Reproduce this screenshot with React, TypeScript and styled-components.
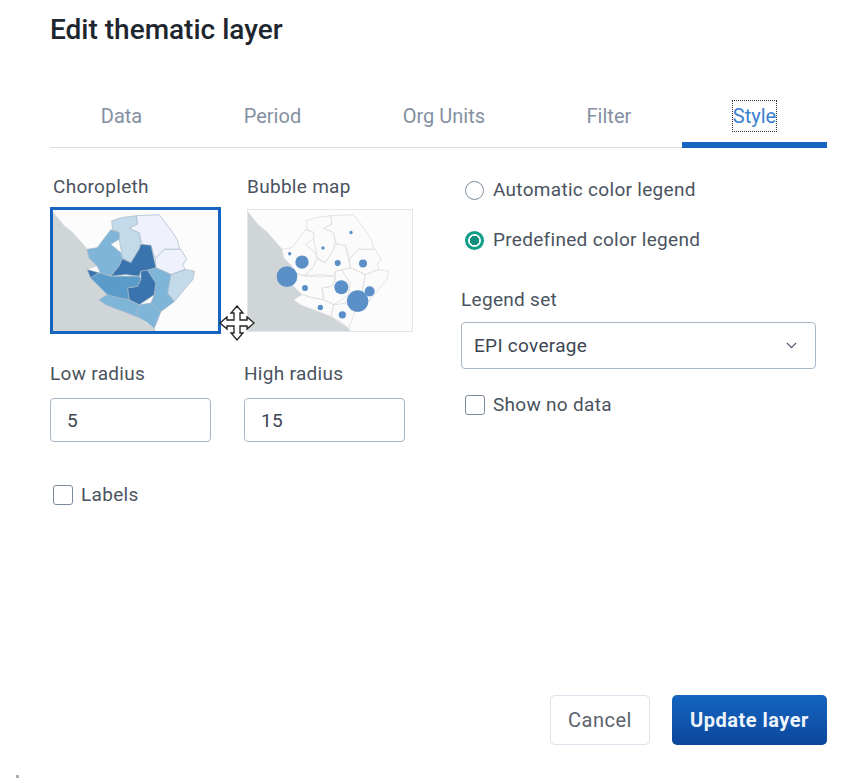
import React from 'react'
import styled, { createGlobalStyle } from 'styled-components'
import { ChevronDown } from 'lucide-react'

const GlobalStyle = createGlobalStyle`
    html, body {
        margin: 0;
        padding: 0;
        background: #fff;
        overflow: hidden;
    }
    * {
        box-sizing: border-box;
    }
    body {
        font-family: Roboto, "Liberation Sans", sans-serif;
    }
`

// shapes share one coordinate space, the outline of the country is the same in both thumbnails
const SEA = 'M43 128 L75 168 L100 188 L145 238 L150 265 L175 290 L145 300 L155 325 L175 345 L205 375 L180 390 L200 405 L240 420 L292 440 L345 475 L350 483 L43 483 Z'

const regions = [
    { d: 'M218 155 L250 145 L292 140 L295 165 L270 178 L300 190 L305 215 L300 240 L275 280 L250 265 L245 235 L240 210 L240 190 L220 180 Z', fill: '#c3daea' },
    { d: 'M292 140 L360 137 L385 170 L400 190 L415 215 L420 240 L375 240 L348 268 L335 228 L315 230 L305 215 L300 190 L270 178 L295 165 Z', fill: '#eff2fd' },
    { d: 'M348 268 L375 240 L425 240 L442 270 L430 285 L437 300 L395 315 L350 295 Z', fill: '#eff2fd' },
    { d: 'M145 240 L175 235 L215 182 L240 190 L240 210 L215 225 L245 250 L250 268 L240 290 L215 318 L185 312 L175 290 L150 265 Z', fill: '#7fb5d9' },
    { d: 'M305 225 L335 228 L350 295 L325 302 L305 305 L300 320 L260 315 L215 320 L240 290 L250 268 L275 280 L300 240 Z', fill: '#3a74ae' },
    { d: 'M145 300 L180 310 L155 325 Z', fill: '#3a74ae' },
    { d: 'M305 305 L325 302 L350 340 L345 375 L300 405 L270 390 L265 355 L295 350 L305 330 Z', fill: '#3a74ae' },
    { d: 'M180 310 L215 320 L300 320 L305 330 L295 350 L265 355 L270 390 L240 385 L205 375 L175 345 L155 325 Z', fill: '#5b9bc9' },
    { d: 'M325 302 L350 295 L395 315 L385 370 L405 395 L365 425 L335 400 L345 375 L350 340 Z', fill: '#7fb5d9' },
    { d: 'M395 315 L437 300 L465 305 L460 330 L430 365 L405 395 L385 370 Z', fill: '#c3daea' },
    { d: 'M180 390 L205 375 L240 385 L270 390 L300 405 L292 440 L240 420 L200 405 Z', fill: '#7fb5d9' },
    { d: 'M300 405 L335 400 L365 425 L345 475 L320 455 L292 440 Z', fill: '#7fb5d9' },
]

const bubbles = [
    [160, 321, 31], [205, 278, 20], [168, 253, 5], [268, 236, 5], [352, 190, 5],
    [312, 281, 9], [388, 282, 12], [214, 355, 9], [323, 353, 21], [372, 394, 32],
    [408, 365, 15], [260, 413, 8], [326, 435, 11],
]

const tabs = ['Data', 'Period', 'Org Units', 'Filter', 'Style']

const MapDrawing: React.FC<{ bubble?: boolean }> = ({ bubble }) => (
    <MapSvg viewBox="43 123 492 360" preserveAspectRatio="none">
        <rect x="43" y="123" width="492" height="360" fill="#fcfcfc" />
        <path d={SEA} fill="#d0d5d8" />
        {regions.map((r) => (
            <path
                key={r.d}
                d={r.d}
                fill={bubble ? '#fbfbfb' : r.fill}
                stroke={bubble ? '#d6d6d6' : '#a3b4c3'}
                strokeWidth="2"
            />
        ))}
        {bubble && bubbles.map(([cx, cy, r]) => (
            <circle key={cx} cx={cx} cy={cy} r={r} fill="#5a8fc7" />
        ))}
    </MapSvg>
)

const App: React.FC = () => {
    return (
        <>
            <GlobalStyle />
            <Dialog>
                <Title>Edit thematic layer</Title>
                <TabBar>
                    {tabs.map((t) => (
                        <Tab key={t} $active={t === 'Style'}>
                            <TabText $active={t === 'Style'}>{t}</TabText>
                        </Tab>
                    ))}
                </TabBar>

                <Columns>
                    <LeftColumn>
                        <ThumbRow>
                            <Thumb>
                                <FieldLabel $indent>Choropleth</FieldLabel>
                                <ThumbFrame $selected>
                                    <MapDrawing />
                                </ThumbFrame>
                            </Thumb>
                            <Thumb>
                                <FieldLabel>Bubble map</FieldLabel>
                                <ThumbFrame>
                                    <MapDrawing bubble />
                                </ThumbFrame>
                            </Thumb>
                        </ThumbRow>

                        <RadiusRow>
                            <div>
                                <InputLabel>Low radius</InputLabel>
                                <ValueBox>5</ValueBox>
                            </div>
                            <div>
                                <InputLabel>High radius</InputLabel>
                                <ValueBox>15</ValueBox>
                            </div>
                        </RadiusRow>

                        <LabelsRow>
                            <CheckBox />
                            Labels
                        </LabelsRow>
                    </LeftColumn>

                    <RightColumn>
                        <RadioRow>
                            <Radio />
                            Automatic color legend
                        </RadioRow>
                        <RadioRow>
                            <Radio $checked />
                            Predefined color legend
                        </RadioRow>
                        <LegendLabel>Legend set</LegendLabel>
                        <Select>
                            EPI coverage
                            <ChevronDown size={17} strokeWidth={1.8} color="#4a5568" />
                        </Select>
                        <NoDataRow>
                            <CheckBox />
                            Show no data
                        </NoDataRow>
                    </RightColumn>
                </Columns>

                <Footer>
                    <CancelButton>Cancel</CancelButton>
                    <UpdateButton>Update layer</UpdateButton>
                </Footer>
            </Dialog>

            <MoveCursor viewBox="0 0 36 36">
                <path
                    d="M18 1 L24 8 L21 8 L21 15 L28 15 L28 12 L35 18 L28 24 L28 21 L21 21 L21 28 L24 28 L18 35 L12 28 L15 28 L15 21 L8 21 L8 24 L1 18 L8 12 L8 15 L15 15 L15 8 L12 8 Z"
                    fill="#fff"
                    stroke="#222"
                    strokeWidth="1.3"
                    strokeLinejoin="miter"
                />
            </MoveCursor>
            <CornerSpeck />
        </>
    )
}

const Dialog = styled.div`
    width: 850px;
    height: 783px;
    padding: 14px 23px 0 50px;
`

const Title = styled.h1`
    margin: 0;
    font-size: 28px;
    line-height: 32px;
    font-weight: 500;
    color: #20262e;
`

const TabBar = styled.div`
    display: flex;
    margin-top: 55px;
    border-bottom: 1px solid #d5dde7;
`

const Tab = styled.div<{ $active?: boolean }>`
    flex: 1 1 auto;
    display: flex;
    justify-content: center;
    padding-bottom: 11px;
    border-bottom: 6px solid ${(p) => (p.$active ? '#1565c0' : 'transparent')};
    margin-bottom: -1px;
`

const TabText = styled.span<{ $active?: boolean }>`
    font-size: 20px;
    line-height: 24px;
    padding: 3px 0;
    color: ${(p) => (p.$active ? '#3a7fd0' : '#8490a1')};
    outline: ${(p) => (p.$active ? '1px dotted #333' : 'none')};
`

const Columns = styled.div`
    display: flex;
    padding-top: 27px;
`

const LeftColumn = styled.div`
    width: 411px;
`

const RightColumn = styled.div`
    width: 355px;
    display: flex;
    flex-direction: column;
`

const ThumbRow = styled.div`
    display: flex;
    gap: 26px;
`

const Thumb = styled.div`
    display: flex;
    flex-direction: column;
`

const FieldLabel = styled.div<{ $indent?: boolean }>`
    font-size: 19px;
    letter-spacing: 0.3px;
    line-height: 24px;
    color: #4a5360;
    padding-left: ${(p) => (p.$indent ? '3px' : '0')};
    margin-bottom: 8px;
`

const ThumbFrame = styled.div<{ $selected?: boolean }>`
    width: ${(p) => (p.$selected ? '171px' : '166px')};
    height: ${(p) => (p.$selected ? '127px' : '123px')};
    margin-top: ${(p) => (p.$selected ? '0' : '2px')};
    border: ${(p) => (p.$selected ? '3px solid #1565c0' : '1px solid #dfe6ee')};
`

const MapSvg = styled.svg`
    display: block;
    width: 100%;
    height: 100%;
    filter: blur(0.4px);
`

const RadiusRow = styled.div`
    display: flex;
    gap: 33px;
    margin-top: 28px;
`

const InputLabel = styled.div`
    font-size: 19px;
    letter-spacing: 0.3px;
    line-height: 24px;
    color: #4a5360;
    margin-bottom: 12px;
`

const ValueBox = styled.div`
    width: 161px;
    height: 44px;
    border: 1px solid #a9b7c6;
    border-radius: 4px;
    padding-left: 16px;
    font-size: 19px;
    letter-spacing: 0.3px;
    line-height: 44px;
    color: #3d4652;
`

const CheckBox = styled.span`
    display: block;
    flex: none;
    width: 20px;
    height: 20px;
    border: 1.5px solid #7e8b9a;
    border-radius: 3px;
    background: #fff;
`

const LabelsRow = styled.div`
    display: flex;
    align-items: center;
    gap: 8px;
    margin: 41px 0 0 3px;
    font-size: 19px;
    letter-spacing: 0.3px;
    line-height: 24px;
    color: #4a5360;
`

const RadioRow = styled.div`
    display: flex;
    align-items: center;
    gap: 9px;
    margin: 3px 0 23px 4px;
    font-size: 19px;
    letter-spacing: 0.3px;
    line-height: 24px;
    color: #4a5360;
`

const Radio = styled.span<{ $checked?: boolean }>`
    display: block;
    flex: none;
    width: 19px;
    height: 19px;
    border-radius: 50%;
    border: ${(p) => (p.$checked ? '3px solid #0f9d8a' : '1.5px solid #7e8b9a')};
    background: ${(p) => (p.$checked ? 'radial-gradient(circle, #0f8f80 0 4.5px, #fff 5px)' : '#fff')};
`

const LegendLabel = styled.div`
    font-size: 19px;
    letter-spacing: 0.3px;
    line-height: 24px;
    color: #4a5360;
    margin-top: 13px;
`

const Select = styled.div`
    display: flex;
    align-items: center;
    justify-content: space-between;
    height: 47px;
    margin-top: 10px;
    padding: 0 15px 0 12px;
    border: 1px solid #a9b7c6;
    border-radius: 4px;
    font-size: 19px;
    letter-spacing: 0.3px;
    color: #3d4652;
`

const NoDataRow = styled.div`
    display: flex;
    align-items: center;
    gap: 8px;
    margin: 24px 0 0 4px;
    font-size: 19px;
    letter-spacing: 0.3px;
    line-height: 24px;
    color: #4a5360;
`

const Footer = styled.div`
    display: flex;
    justify-content: flex-end;
    gap: 22px;
    margin-top: 188px;
`

const CancelButton = styled.button`
    width: 100px;
    height: 50px;
    background: #fff;
    border: 1px solid #dbe3ec;
    border-radius: 5px;
    font-family: inherit;
    font-size: 20px;
    letter-spacing: 0.5px;
    color: #5b636e;
`

const UpdateButton = styled.button`
    width: 155px;
    height: 50px;
    background: linear-gradient(180deg, #1565c0, #0b479c);
    border: none;
    border-radius: 5px;
    font-family: inherit;
    font-size: 20px;
    font-weight: 700;
    letter-spacing: 0.5px;
    color: #eef4fb;
`

// the mouse pointer caught in the screenshot, sits over the page
const MoveCursor = styled.svg`
    position: absolute;
    left: 219px;
    top: 305px;
    width: 36px;
    height: 36px;
`

const CornerSpeck = styled.span`
    position: absolute;
    left: 16px;
    top: 775px;
    width: 3px;
    height: 3px;
    background: #a9b3a9;
`

export default App
